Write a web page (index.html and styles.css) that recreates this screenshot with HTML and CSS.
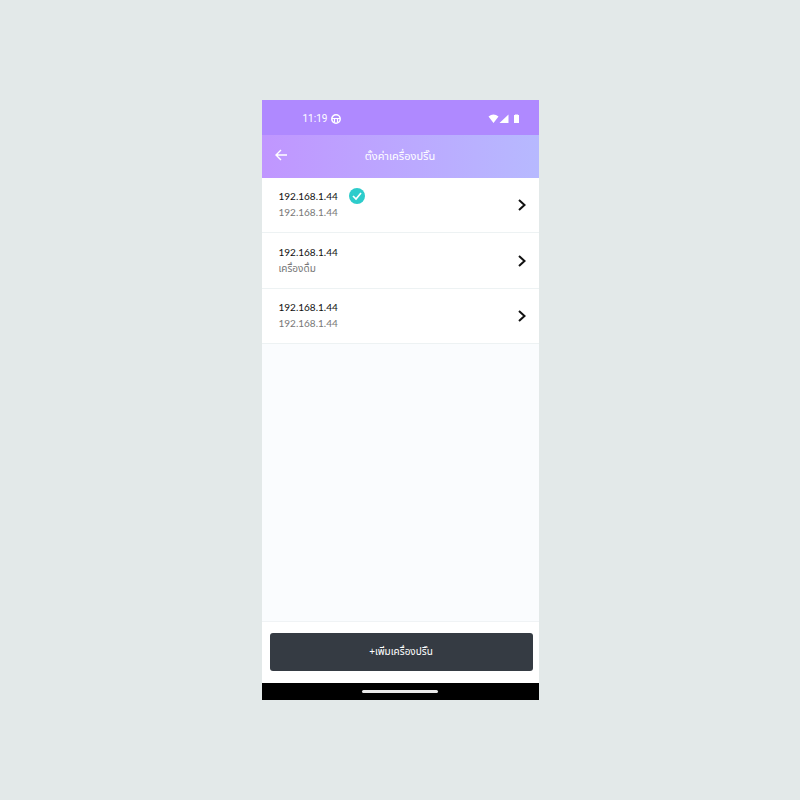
FILE: index.html
```html
<!DOCTYPE html>
<html lang="th">
<head>
<meta charset="utf-8">
<meta name="viewport" content="width=device-width, initial-scale=1">
<title>ตั้งค่าเครื่องปริ๊น</title>
<link rel="stylesheet" href="styles.css">
</head>
<body>
<div class="phone">
  <div class="status">
    <span class="time">11:19</span>
    <svg class="debug" viewBox="0 0 10 10" aria-hidden="true"><circle cx="5" cy="5" r="4.200" fill="none" stroke="#fff" stroke-width="1.500"/><path d="M1 4.500H9M3.500 4.500V8.500M6.500 4.500V8.500" stroke="#fff" stroke-width="1.200" fill="none"/></svg>
    <svg class="signals" viewBox="0 0 32 10" aria-hidden="true"><path fill="#fff" d="M0.500 2.500Q5.500-1.500 10.500 2.500L5.500 9ZM20.500 0.500V9H11.500ZM26 1H27V.5H30V1H31V9H26Z"/></svg>
  </div>
  <header class="header">
    <button class="back" aria-label="Back"><svg viewBox="0 0 12 12" aria-hidden="true"><path d="M6 1L1 6L6 11M1 6H12" fill="none" stroke="#fff" stroke-width="1.400"/></svg></button>
    <h1 class="title">ตั้งค่าเครื่องปริ๊น</h1>
  </header>
  <main class="content">
    <ul class="list">
      <li><button class="row"><span class="text"><span class="name">192.168.1.44 <svg class="check" viewBox="0 0 16 16" aria-hidden="true"><circle cx="8" cy="8" r="8" fill="#2dcccb"/><path d="M4 8L7 11L12 5" fill="none" stroke="#fff" stroke-width="1.700"/></svg></span><span class="sub">192.168.1.44</span></span><svg class="chevron" viewBox="0 0 8 12" aria-hidden="true"><path d="M1 1L6.500 6L1 11"/></svg></button></li>
      <li><button class="row"><span class="text"><span class="name">192.168.1.44</span><span class="sub">เครื่องดื่ม</span></span><svg class="chevron" viewBox="0 0 8 12" aria-hidden="true"><path d="M1 1L6.500 6L1 11"/></svg></button></li>
      <li><button class="row"><span class="text"><span class="name">192.168.1.44</span><span class="sub">192.168.1.44</span></span><svg class="chevron" viewBox="0 0 8 12" aria-hidden="true"><path d="M1 1L6.500 6L1 11"/></svg></button></li>
    </ul>
  </main>
  <footer class="footer"><button class="add">+เพิ่มเครื่องปริ๊น</button></footer>
  <div class="nav"><span class="handle"></span></div>
</div>
</body>
</html>
```
FILE: styles.css
```css
* { box-sizing: border-box; }
body { margin: 0; min-height: 100vh; display: grid; place-items: center; background: #e3e9e9; font-family: "Noto Sans Thai", "Noto Sans", sans-serif; }
button { border: 0; padding: 0; background: none; font: inherit; }
svg { display: block; }
.phone { width: 34.6%; min-width: 277px; height: 75vh; min-height: 599px; display: flex; flex-direction: column; background: #fafcfe; }
.status { height: 35px; display: flex; align-items: center; gap: 4px; padding: 2px 19px 0 41px; background: #af89ff; color: #fff; }
.time { font: 10px Roboto, sans-serif; }
.debug { width: 10px; height: 10px; }
.signals { width: 32px; height: 10px; margin-left: auto; }
.header { height: 43px; display: grid; grid-template-columns: 39px 1fr 39px; align-items: center; background: linear-gradient(90deg, #c096ff, #b7b9ff); color: #fff; }
.back { justify-self: center; padding-bottom: 4px; }
.back svg { width: 12px; height: 12px; }
.title { margin: 0; font-size: 11px; line-height: 16px; font-weight: 400; text-align: center; }
.content { flex: 1; }
.list { margin: 0; padding: 0; list-style: none; background: #fff; }
.list li { border-bottom: 1px solid #edf2f3; }
.row { width: 100%; height: 54px; display: flex; align-items: center; justify-content: space-between; padding: 0 13px 0 17px; text-align: left; }
.list li:nth-child(even) .row { height: 55px; }
.text { display: grid; padding-bottom: 2px; font-family: Lato, "Noto Sans Thai", sans-serif; font-size: 10px; line-height: 16px; }
.name { display: flex; gap: 11px; color: #111; }
.sub { color: #777; }
.check { width: 16px; height: 16px; }
.chevron { width: 8px; height: 12px; fill: none; stroke: #111; stroke-width: 2; }
.footer { padding: 11px 6px 12px 8px; border-top: 1px solid #f0f3f5; background: #fff; }
.add { display: block; width: 100%; height: 38px; border-radius: 3px; background: #353b43; color: #fff; font-size: 10px; }
.nav { height: 17px; display: grid; place-items: center; background: #000; }
.handle { width: 76px; height: 3px; border-radius: 2px; background: #e9e9e9; }
```
